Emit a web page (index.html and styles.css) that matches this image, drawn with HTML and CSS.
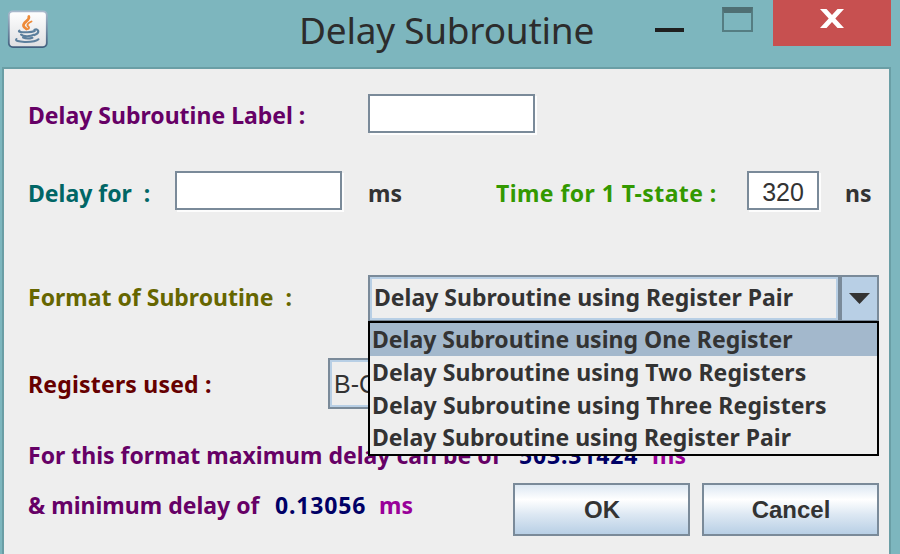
FILE: index.html
```
<!DOCTYPE html>
<html lang="en">
<head>
<meta charset="utf-8">
<title>Delay Subroutine</title>
<link rel="stylesheet" href="styles.css">
</head>
<body>
<div class="window">
  <header class="titlebar">
    <svg class="java" width="42" height="42" viewBox="0 0 42 42">
      <defs>
        <linearGradient id="face" x1="0" y1="0" x2="0" y2="1"><stop offset="0" stop-color="#fff"/><stop offset="1" stop-color="#dedfe2"/></linearGradient>
        <linearGradient id="rim" x1="0" y1="0" x2="0" y2="1"><stop offset="0" stop-color="#a9b9cc"/><stop offset="1" stop-color="#41607f"/></linearGradient>
      </defs>
      <rect x="1.8" y="1.3" width="38" height="35.8" rx="4" fill="url(#face)" stroke="url(#rim)" stroke-width="1.8"/>
      <g fill="none" stroke-linecap="round">
        <path d="M21.800 6.500c1.600 4-6.400 5.600-5.300 9.500.5 1.400 2.200 2.200 3 3" stroke="#ee8a38" stroke-width="2.700"/>
        <path d="M24.500 11.500c-4.500 2-5 3.800-3 5.300 1 .9.400 1.600-.6 2.200" stroke="#ee8a38" stroke-width="1.900"/>
        <path d="M12.500 20.500c-2.500 1.600 3 1.800 8 1.700 3 0 5.500-.4 7.300-1.200M14 24.500c2 2.200 9.500 2.200 13 .2M16 27.500c2.500 1.200 6.500 1.200 9.500.2" stroke="#5b7f9d" stroke-width="2"/>
        <path d="M27.500 19.800c4.500-1.600 5.500 3.200 0 5.200" stroke="#5b7f9d" stroke-width="2.200"/>
        <path d="M9.500 29c-4 3.500 18 4.200 22 .2" stroke="#5b7f9d" stroke-width="2"/>
      </g>
    </svg>
    <h1 class="title">Delay Subroutine</h1>
    <div class="controls">
      <span class="minimize"></span>
      <span class="maximize"></span>
      <span class="close"><svg width="24" height="20" viewBox="0 0 24 20"><path d="M0 0h6.500L12 6l5.500-6H24l-8.700 9.500L24 19h-6.500L12 13l-5.500 6H0l8.700-9.500z" fill="#fff"/></svg></span>
    </div>
  </header>
  <main class="panel">
    <div class="row row-label">
      <span class="purple name">Delay Subroutine Label :</span>
      <span class="field"></span>
    </div>
    <div class="row row-delay">
      <span class="teal delay">Delay for&nbsp; :</span>
      <span class="field"></span>
      <span class="ms">ms</span>
      <span class="green state">Time for 1 T-state :</span>
      <span class="field small">320</span>
      <span>ns</span>
    </div>
    <div class="row row-format">
      <span class="olive name">Format of Subroutine&nbsp; :</span>
      <div class="combo">
        <span class="value">Delay Subroutine using Register Pair</span>
        <span class="arrow"><svg width="21" height="12" viewBox="0 0 21 12"><path d="M0 0h21L10.500 11z" fill="#333"/></svg></span>
        <ul class="menu">
          <li class="selected">Delay Subroutine using One Register</li>
          <li class="two">Delay Subroutine using Two Registers</li>
          <li class="three">Delay Subroutine using Three Registers</li>
          <li>Delay Subroutine using Register Pair</li>
        </ul>
      </div>
    </div>
    <div class="row row-registers">
      <span class="maroon used">Registers used :</span>
      <div class="pair">B-C</div>
    </div>
    <div class="row row-max">
      <span class="purple max">For this format maximum delay can be of</span>
      <span class="navy number">503.31424</span>
      <span class="magenta">ms</span>
    </div>
    <div class="row row-min">
      <span class="purple min">&amp; minimum delay of</span>
      <span class="navy number low">0.13056</span>
      <span class="magenta unit">ms</span>
      <button class="button">OK</button>
      <button class="button">Cancel</button>
    </div>
  </main>
</div>
</body>
</html>
```
FILE: styles.css
```
* { box-sizing: border-box; }

body {
  margin: 0;
  width: 900px;
  height: 554px;
  overflow: hidden;
  background: #7db6be;
  font: bold 23px/32px "Noto Sans", sans-serif;
  color: #333;
}

.window {
  display: flex;
  flex-direction: column;
  height: 554px;
  padding: 0 9px 0 2px;
}

.titlebar {
  display: grid;
  grid-template-columns: 298px 1fr auto;
  height: 67px;
}
.java { margin: 10px 0 0 5px; }
.title {
  margin: 5px 0 0 -1px;
  font: 400 37px/50px "Noto Sans", sans-serif;
  letter-spacing: -0.25px;
  color: #2c2c2c;
  white-space: nowrap;
}
.controls { display: flex; align-items: flex-start; }
.minimize { width: 29px; height: 4px; margin: 28px 38px 0 0; background: #1f1f1f; }
.maximize { width: 31px; height: 25px; margin: 7px 20px 0 0; border: 2px solid #557d82; border-top: 6px solid #4f6f73; }
.close {
  display: flex;
  justify-content: center;
  width: 118px;
  height: 46px;
  padding: 9px 1px 0 0;
  background: #c75050;
}

.panel {
  flex: 1;
  border: 2px solid #6a9ea5;
  border-bottom: 0;
  background: #eee;
  padding: 24px 0 0 24px;
}
.row { display: flex; align-items: center; white-space: nowrap; }
.row > * { flex: none; }

.row-label { height: 40px; }
.name { width: 340px; }
.field {
  width: 167px;
  height: 39px;
  border: 2px solid #7a8a99;
  background: #fff;
  box-shadow: 2px 2px 0 #fdfdfd;
}
.row-label .name { padding-top: 4px; }

.row-delay { height: 40px; margin-top: 37px; padding-top: 1px; }
.row-delay span:not(.field) { padding-top: 4px; }
.delay { width: 147px; }
.ms { width: 128px; margin-left: 26px; }
.state { width: 251px; letter-spacing: 0.43px; }
.small {
  width: 72px;
  margin-right: 26px;
  padding-top: 3px;
  text-align: center;
  font: 25px/33px "Liberation Sans", sans-serif;
}

.row-format { margin-top: 65px; height: 47px; }
.row-format .name { padding-bottom: 3px; }
.combo {
  position: relative;
  display: flex;
  width: 511px;
  height: 47px;
  border: 2px solid #7a8a99;
}
.value {
  flex: 1;
  padding-left: 2px;
  border: 2px solid #b8cfe5;
  line-height: 36px;
}
.arrow {
  display: flex;
  align-items: center;
  justify-content: center;
  width: 39px;
  padding-right: 1px;
  border-left: 4px solid #7a8a99;
  background: #b8cfe5;
}
.menu {
  position: absolute;
  left: -2px;
  top: 44px;
  width: 511px;
  height: 135px;
  margin: 0;
  padding: 0;
  border: 2px solid #000;
  background: #eee;
  list-style: none;
}
.menu li { height: 32.7px; padding-left: 2px; line-height: 32px; }
.menu .selected { height: 33px; background: #a3b8cc; }
.menu .two { letter-spacing: 0.06px; }
.menu .three { letter-spacing: 0.1px; }

.row-registers { margin-top: 36px; height: 51px; }
.used { width: 300px; letter-spacing: 0.2px; }
.pair {
  width: 130px;
  height: 51px;
  border: 2px solid #7a8a99;
  box-shadow: inset 0 0 0 2px #b8cfe5;
  padding-left: 4px;
  font: 25px/49px "Liberation Sans", sans-serif;
}

.row-max { height: 32px; margin-top: 30px; }
.max { width: 491px; }
.number { letter-spacing: 0.85px; width: 133px; }

.row-min { height: 54px; margin-top: 11px; }
.row-min span { padding-bottom: 8px; }
.min { width: 247px; }
.low { width: 104px; }
.unit { width: 134px; }
.button {
  width: 177px;
  height: 53px;
  margin: 0 12px 0 0;
  padding: 1px 0 0 1px;
  border: 2px solid #7a8a99;
  background: linear-gradient(#dde8f3, #fff 30%, #dde8f3 60%, #b8cfe5);
  font: bold 24px/47px "Liberation Sans", sans-serif;
  color: #333;
}

.purple { color: #660066; }
.teal { color: #006666; }
.green { color: #339900; }
.olive { color: #666600; }
.maroon { color: #660000; }
.navy { color: #000066; }
.magenta { color: #990099; }
```
